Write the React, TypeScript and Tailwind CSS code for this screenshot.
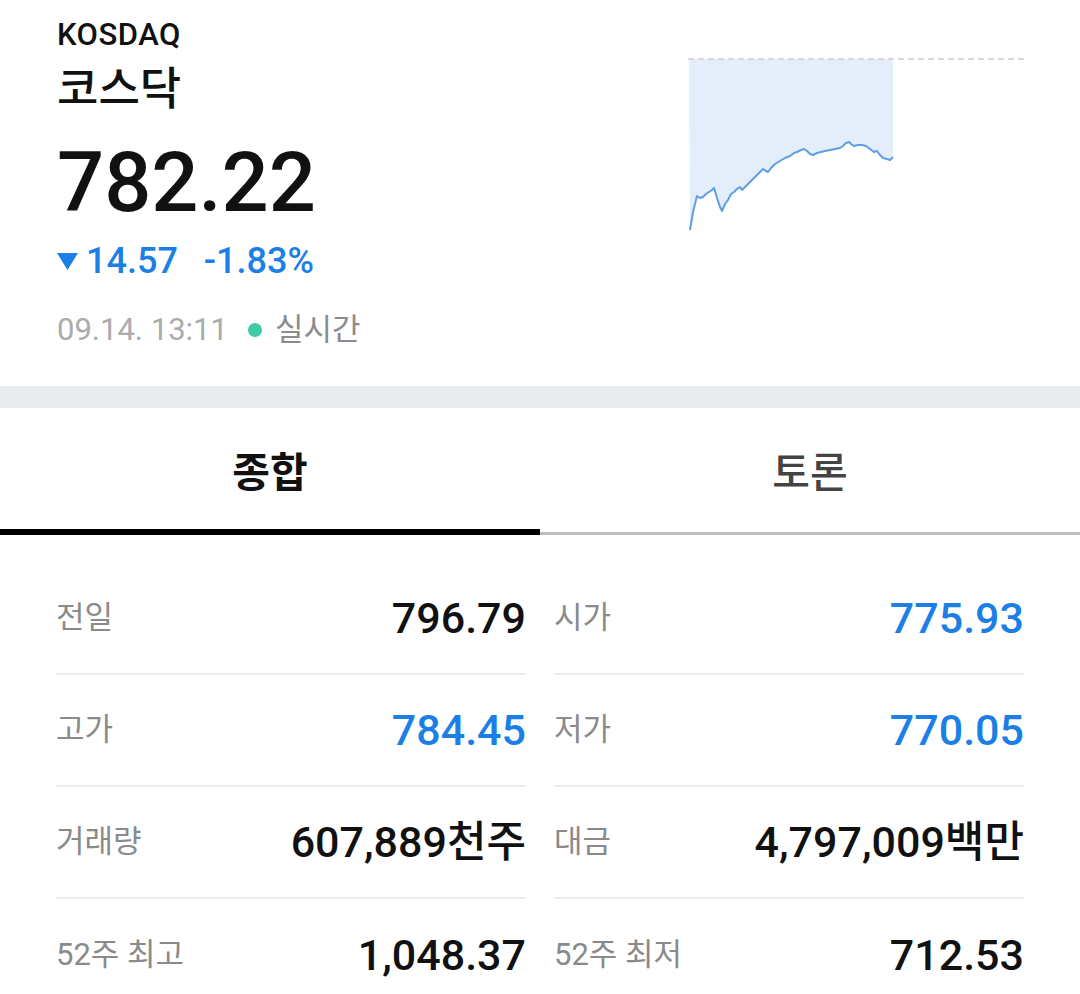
import React from 'react';

const font = { fontFamily: 'Roboto, "Noto Sans CJK KR", sans-serif' };

const linePoints = [
  [690, 230], [693, 212], [697, 196], [700, 198], [703, 197], [706, 194], [709, 192], [712, 190], [714, 188],
  [717, 198], [720, 207], [722, 211], [725, 204], [728, 200], [731, 194], [734, 192], [737, 189], [740, 187],
  [742, 190], [744, 188], [748, 184], [752, 180], [756, 176], [760, 172], [763, 169], [766, 171], [768, 172],
  [771, 168], [775, 164], [780, 161], [785, 158], [790, 156], [794, 153], [797, 152], [801, 150], [804, 149],
  [807, 151], [810, 154], [813, 155], [817, 153], [821, 152], [825, 151], [830, 150], [835, 149], [840, 148],
  [843, 146], [846, 143], [849, 142], [851, 144], [854, 146], [858, 145], [862, 145], [866, 146], [870, 149],
  [874, 152], [877, 151], [880, 155], [883, 158], [887, 159], [890, 160], [893, 157],
];

function MiniChart() {
  const line = linePoints.map(([x, y]) => `${x},${y}`).join(' ');
  const area = `689,59 ${line} 893,59`;
  return (
    <svg width={340} height={200} viewBox="684 50 340 200" className="mt-[50px] shrink-0">
      <polygon points={area} fill="#e4eefa" />
      <line x1={688} y1={59} x2={1024} y2={59} stroke="#cfcfcf" strokeWidth={1.5} strokeDasharray="6 4" />
      <polyline points={line} fill="none" stroke="#5c9fe2" strokeWidth={2} strokeLinejoin="round" />
    </svg>
  );
}

type Stat = { label: string; value: string; blue?: boolean };

const stats: Stat[] = [
  { label: '전일', value: '796.79' },
  { label: '시가', value: '775.93', blue: true },
  { label: '고가', value: '784.45', blue: true },
  { label: '저가', value: '770.05', blue: true },
  { label: '거래량', value: '607,889천주' },
  { label: '대금', value: '4,797,009백만' },
  { label: '52주 최고', value: '1,048.37' },
  { label: '52주 최저', value: '712.53' },
];

export default function App() {
  return (
    <div className="min-h-screen bg-white text-[#111]" style={font}>
      <header className="flex h-[386px] pl-[57px] pr-[56px]">
        <div className="flex-1 pt-[19px]">
          <div className="text-[31px] leading-[31px] font-medium tracking-[0.5px]">KOSDAQ</div>
          <div className="mt-[17px] text-[45px] leading-[45px] font-medium">코스닥</div>
          <div className="mt-[29px] text-[83px] leading-[84px] font-medium">782.22</div>
          <div className="mt-[18px] flex items-center text-[36px] leading-[36px] font-medium text-[#1b7fe5]">
            <svg width={21} height={17} viewBox="0 0 21 17" className="mr-[8px]">
              <polygon points="0,0 21,0 10.5,17" fill="#1b7fe5" />
            </svg>
            <span>14.57</span>
            <span className="ml-[26px]">-1.83%</span>
          </div>
          <div className="mt-[36px] flex items-center text-[31px] leading-[30px] text-[#ababab]">
            <span>09.14. 13:11</span>
            <span className="ml-[20px] mr-[13px] inline-block h-[14px] w-[14px] rounded-full bg-[#3dcca6]" />
            <span className="text-[31px] text-[#8c8c8c]">실시간</span>
          </div>
        </div>
        <MiniChart />
      </header>

      <div className="h-[22px] bg-[#e9ecef]" />

      <nav className="grid h-[127px] grid-cols-2">
        <div className="flex items-center justify-center border-b-[6px] border-black pt-[10px] text-[41px] font-bold">종합</div>
        <div className="flex items-center justify-center border-b-[3px] border-[#bdbdbd] pt-[7px] text-[41px] font-medium text-[#444]">토론</div>
      </nav>

      <section className="grid grid-cols-2 gap-x-[28px] px-[56px] pt-[28px]">
        {stats.map((s, i) => (
          <div
            key={s.label}
            className={`flex h-[112px] items-center justify-between ${i < 6 ? 'border-b-2 border-[#eeeeee]' : ''}`}
          >
            <span className="text-[31px] text-[#8a8a8a]">{s.label}</span>
            <span className={`text-[43px] font-medium ${s.blue ? 'text-[#1b7fe5]' : 'text-[#111]'}`}>{s.value}</span>
          </div>
        ))}
      </section>
    </div>
  );
}
